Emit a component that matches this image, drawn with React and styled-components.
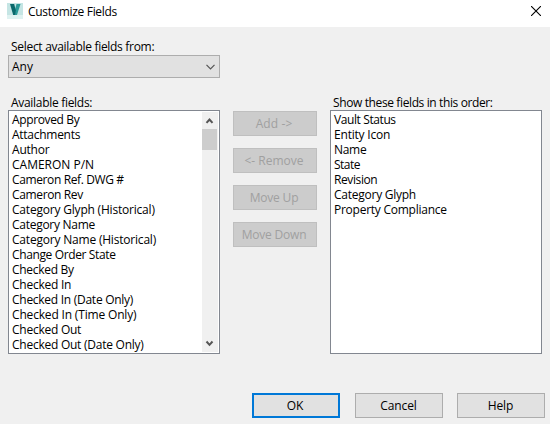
import React from "react";
import styled, { createGlobalStyle } from "styled-components";

const GlobalStyle = createGlobalStyle`
  * { box-sizing: border-box; }
  html, body { margin: 0; padding: 0; background: #f0f0f0; overflow: hidden; }
  button { font: inherit; }
`;

const Dialog = styled.main`
  width: 550px;
  height: 424px;
  display: flex;
  flex-direction: column;
  background: #f0f0f0;
  color: #000;
  font: 12px/15px "Open Sans", "Noto Sans", sans-serif;
  white-space: nowrap;
`;

const TitleBar = styled.header`
  height: 27px;
  display: flex;
  align-items: flex-start;
  padding: 3px 9px 0 7px;
  background: #fff;
`;

const Title = styled.h1`
  flex: 1;
  margin: 1px 0 0 5px;
  font: inherit;
`;

const CloseButton = styled.button`
  width: 10px;
  height: 10px;
  margin-top: 3px;
  padding: 0;
  border: 0;
  background: none;
  svg { display: block; }
`;

const Text = styled.span`
  letter-spacing: ${(p) => p.$track || 0}px;
`;

const Source = styled.section`
  width: 212px;
  height: 51px;
  margin: 12px 0 0 8px;
`;

const Label = styled.div`
  height: ${(p) => p.$height || 15}px;
  padding-left: 3px;
`;

const Combo = styled.div`
  width: 212px;
  height: 23px;
  display: flex;
  align-items: center;
  justify-content: space-between;
  padding: 0 4px 0 3px;
  border: 1px solid #adadad;
  background: #e1e1e1;
`;

const Columns = styled.section`
  display: flex;
  height: 259px;
  margin: 5px 0 0 8px;
`;

const Column = styled.div`
  width: 212px;
`;

const ListBox = styled.div`
  width: 212px;
  height: 244px;
  display: flex;
  justify-content: space-between;
  border: 1px solid #828790;
  background: #fff;
`;

const Items = styled.ul`
  list-style: none;
  margin: 0;
  padding: 1px 0 0 3px;
`;

const Item = styled.li`
  height: 15px;
`;

const ScrollBar = styled.div`
  width: 16px;
  height: 240px;
  margin: 1px 1px 0 0;
  display: flex;
  flex-direction: column;
  justify-content: space-between;
  background: #f0f0f0;
  svg { display: block; }
`;

const Thumb = styled.div`
  width: 15px;
  height: 21px;
  background: #cdcdcd;
  margin-bottom: auto;
`;

const Actions = styled.div`
  width: 84px;
  margin: 16px 13px 0;
  display: flex;
  flex-direction: column;
  gap: 12px;
`;

const ActionButton = styled.button`
  width: 84px;
  height: 25px;
  padding: 0 2px 1px 0;
  border: 1px solid #bfbfbf;
  background: #ccc;
  color: #a0a0a0;
`;

const Footer = styled.footer`
  display: flex;
  margin: 39px 0 0 252px;
`;

const FooterButton = styled.button`
  width: 88px;
  height: 25px;
  margin-right: ${(p) => p.$gap || 0}px;
  padding: 0 ${(p) => p.$shift || 0}px 0 0;
  border: ${(p) => (p.$primary ? "2px solid #0078d7" : "1px solid #adadad")};
  background: #e1e1e1;
  color: #000;
`;

const available = [
  ["Approved By", -0.36],
  ["Attachments", -0.27],
  ["Author", -0.2],
  ["CAMERON P/N", 0],
  ["Cameron Ref. DWG #", -0.38],
  ["Cameron Rev", -0.36],
  ["Category Glyph (Historical)", -0.2],
  ["Category Name", -0.27],
  ["Category Name (Historical)", -0.2],
  ["Change Order State", -0.37],
  ["Checked By", -0.3],
  ["Checked In", -0.25],
  ["Checked In (Date Only)", -0.27],
  ["Checked In (Time Only)", -0.17],
  ["Checked Out", -0.25],
  ["Checked Out (Date Only)", -0.25],
];

const shown = [
  ["Vault Status", -0.4],
  ["Entity Icon", -0.2],
  ["Name", -0.3],
  ["State", -0.5],
  ["Revision", -0.4],
  ["Category Glyph", -0.25],
  ["Property Compliance", -0.25],
];

const actions = [
  ["Add ->", 0.1],
  ["<- Remove", 0],
  ["Move Up", -0.2],
  ["Move Down", -0.2],
];

function FieldList({ fields }) {
  return (
    <Items>
      {fields.map(([name, track]) => (
        <Item key={name}><Text $track={track}>{name}</Text></Item>
      ))}
    </Items>
  );
}

function VaultLogo() {
  return (
    <svg width="16" height="16" viewBox="0 0 16 16">
      <path fill="#c5e5e4" d="M0 0h16v16H0z" />
      <path fill="#dff2f1" d="M0 12h16v4H0z" />
      <path fill="#2a9a98" d="M9.5 1H13.5L10 12H6.5z" />
      <path fill="#0b696c" d="M3 1H7.2L8.8 7.5 8 12H6.2z" />
    </svg>
  );
}

export default function App() {
  return (
    <Dialog>
      <GlobalStyle />
      <TitleBar>
        <VaultLogo />
        <Title><Text $track={-0.3}>Customize Fields</Text></Title>
        <CloseButton aria-label="Close">
          <svg width="10" height="10" viewBox="0 0 10 10">
            <path d="M0 0l10 10M10 0L0 10" stroke="#000" strokeWidth="1.1" />
          </svg>
        </CloseButton>
      </TitleBar>
      <Source>
        <Label $height={16}><Text $track={-0.3}>Select available fields from:</Text></Label>
        <Combo>
          <Text>Any</Text>
          <svg width="9" height="6" viewBox="0 0 9 6">
            <path d="M.5.8l4 4 4-4" fill="none" stroke="#555" strokeWidth="1.2" />
          </svg>
        </Combo>
      </Source>
      <Columns>
        <Column>
          <Label><Text $track={-0.3}>Available fields:</Text></Label>
          <ListBox>
            <FieldList fields={available} />
            <ScrollBar>
              <svg width="16" height="17" viewBox="0 0 16 17">
                <path d="M4.5 10.8L7.5 7.5l3 3.3" fill="none" stroke="#555" strokeWidth="2" />
              </svg>
              <Thumb />
              <svg width="16" height="17" viewBox="0 0 16 17">
                <path d="M4.5 6.5l3 3.3 3-3.3" fill="none" stroke="#555" strokeWidth="2" />
              </svg>
            </ScrollBar>
          </ListBox>
        </Column>
        <Actions>
          {actions.map(([name, track]) => (
            <ActionButton key={name}><Text $track={track}>{name}</Text></ActionButton>
          ))}
        </Actions>
        <Column>
          <Label><Text $track={-0.38}>Show these fields in this order:</Text></Label>
          <ListBox><FieldList fields={shown} /></ListBox>
        </Column>
      </Columns>
      <Footer>
        <FooterButton $primary $gap={15} $shift={2}><Text>OK</Text></FooterButton>
        <FooterButton $gap={14} $shift={1}><Text $track={-0.1}>Cancel</Text></FooterButton>
        <FooterButton $shift={1}><Text $track={-0.1}>Help</Text></FooterButton>
      </Footer>
    </Dialog>
  );
}
